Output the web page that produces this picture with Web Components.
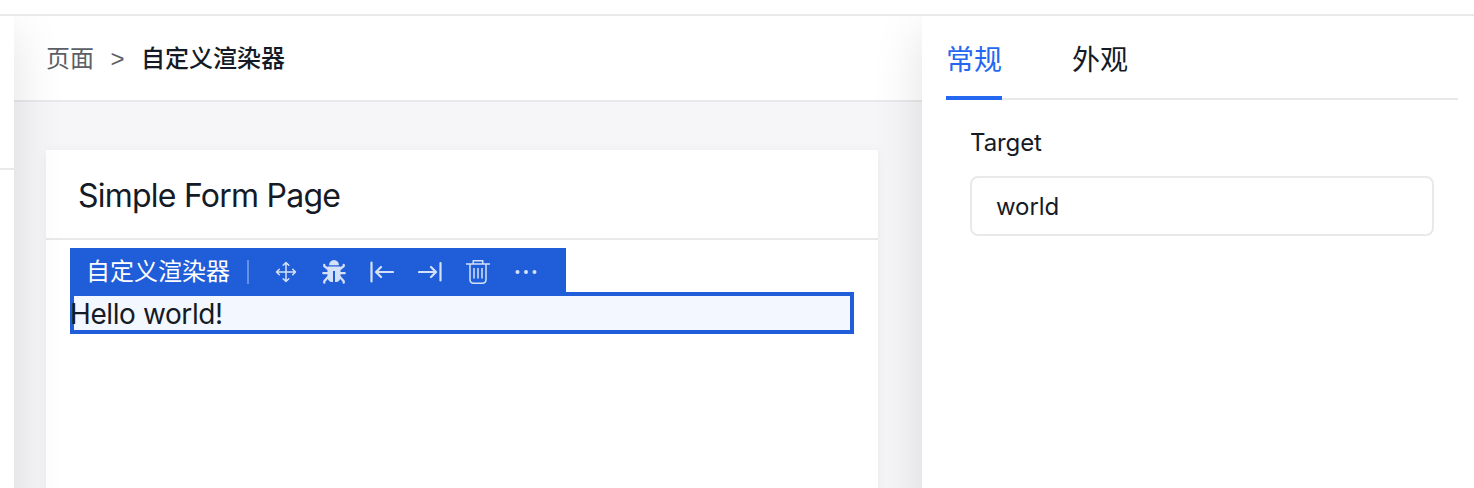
<!DOCTYPE html>
<html lang="zh-CN"><head><meta charset="utf-8"><title>Page editor</title>
<style>
html,body{margin:0;height:100%;overflow:hidden;background:#fff}
body{font-family:Inter,"Noto Sans CJK SC",sans-serif;color:#151b26}
</style></head><body>
<editor-shell>
  <side-rail slot="left"></side-rail>
  <editor-canvas slot="main">
    <bread-crumb parent="页面" slot="crumbs">自定义渲染器</bread-crumb>
    <page-card heading="Simple Form Page">
      <selection-toolbar>自定义渲染器</selection-toolbar>
      <selected-region>Hello world!</selected-region>
    </page-card>
  </editor-canvas>
  <property-panel slot="right">
    <panel-tab slot="tabs" active>常规</panel-tab>
    <panel-tab slot="tabs">外观</panel-tab>
    <form-field label="Target">world</form-field>
  </property-panel>
</editor-shell>
<script>
const define=(name,html)=>customElements.define(name,class extends HTMLElement{
  connectedCallback(){
    if(this.shadowRoot)return;
    const t=document.createElement('template');
    t.innerHTML=html;
    const root=this.attachShadow({mode:'open'});
    root.append(t.content.cloneNode(true));
    root.querySelectorAll('[data-attr]').forEach(n=>n.textContent=this.getAttribute(n.dataset.attr));
  }
});
define('editor-shell',`<style>
:host{display:flex;flex-direction:column;height:100vh}
header{flex:none;height:14px;border-bottom:2px solid #e8e9eb}
main{flex:1;display:grid;grid-template-columns:14px 908px 1fr;grid-template-rows:calc(100% + 80px);overflow:hidden}
</style><header></header><main><slot name="left"></slot><slot name="main"></slot><slot name="right"></slot></main>`);
define('side-rail',`<style>
:host{display:block;margin-left:-200px;background:#fff;z-index:2;box-shadow:0 16px 48px rgba(0,0,0,.12)}
div{height:152px;border-bottom:2px solid #e8e9eb}
</style><div></div>`);
define('editor-canvas',`<style>
:host{display:flex;flex-direction:column;background:#f6f6f9;min-height:0}
header{flex:none;height:84px;background:#fff;border-bottom:2px solid #e8e9eb}
section{flex:1;display:flex;padding:48px 44px 0 32px}
</style><header><slot name="crumbs"></slot></header><section><slot></slot></section>`);
define('bread-crumb',`<style>
:host{display:flex;align-items:center;box-sizing:border-box;height:84px;padding:1px 0 0 32px;font-size:24px;line-height:36px}
span{color:#5c5f66}
i{font-style:normal;color:#5c5f66;width:47px;text-align:center;font-family:"Liberation Sans",sans-serif;padding-top:1px;box-sizing:border-box}
b{font-weight:500}
</style><span data-attr="parent"></span><i>&gt;</i><b><slot></slot></b>`);
define('page-card',`<style>
:host{display:block;flex:1;background:#fff;box-shadow:0 2px 12px rgba(0,0,0,.05)}
h1{margin:0;height:88px;line-height:91px;padding-left:32px;font-size:32px;font-weight:400;letter-spacing:-.76px;border-bottom:2px solid #e8e9eb;font-family:Inter,sans-serif}
div{padding:8px 24px}
</style><h1 data-attr="heading"></h1><div><slot></slot></div>`);
define('selection-toolbar',`<style>
:host{display:flex;align-items:center;box-sizing:border-box;width:496px;height:44px;padding:4px 0 0 16px;background:#205dd9;color:#fff;font-size:24px;line-height:36px}
hr{margin:0 0 0 17px;border:0;width:2px;height:24px;background:#6791e5}
nav{display:flex;gap:24px;margin-left:25px;margin-right:auto}
svg{display:block;width:24px;height:24px;fill:none;stroke:#d5e1f8;stroke-width:1.5;stroke-linecap:round;stroke-linejoin:round}
</style><slot></slot><hr><nav>
<svg viewBox="0 0 24 24"><path d="M12 2.500v19M2.500 12h19M9.200 5.300L12 2.500l2.800 2.800M9.200 18.700l2.800 2.800 2.800-2.800M5.300 9.200L2.500 12l2.800 2.800M18.700 9.200l2.800 2.800-2.800 2.800"/></svg>
<svg viewBox="0 0 24 24"><path d="M7 5.200a5 5.200 0 0 1 10 0zM5.500 6.600h13V17q0 3.500-3.500 5h-2V11h-2v11H9q-3.500-1.500-3.500-5z" fill="#d5e1f8" stroke="none"/><path d="M2.300 5v1.200L6 9M21.700 5v1.200L18 9M6 13.200H1.300M18 13.200h4.700M6 17l-3.700 4.200v1.500M18 17l3.700 4.200v1.500" stroke-width="2.300" style="stroke-width:2.3"/></svg>
<svg viewBox="0 0 24 24" style="stroke-width:2.2"><path d="M1.500 2.500v19M23 12H6.500M11 7l-5 5 5 5"/></svg>
<svg viewBox="0 0 24 24" style="stroke-width:2.2"><path d="M22.500 3v17.500M1 12h16.500M13 7l5 5-5 5"/></svg>
<svg viewBox="0 0 24 24" style="overflow:visible;stroke-linecap:butt"><path d="M0 3.900h24M7.200 3.500V.8h9.600v2.700M4 4v15.500q0 3.700 3.700 3.700h8.600q3.700 0 3.700-3.700V4M8 8v10.500M12 8v10.500M16 8v10.500"/></svg>
<svg viewBox="0 0 24 24" style="fill:#d5e1f8;stroke:none"><circle cx="3.500" cy="12" r="2"/><circle cx="12" cy="12" r="2"/><circle cx="20.500" cy="12" r="2"/></svg>
</nav>`);
define('selected-region',`<style>
:host{display:block;box-sizing:border-box;height:42px;border:4px solid #205dd9;background:#f3f7ff;font-size:28px;line-height:36px;letter-spacing:-.4px}
span{margin-left:-4px}
</style><span><slot></slot></span>`);
define('property-panel',`<style>
:host{display:block;z-index:2;background:#fff;box-shadow:0 16px 48px rgba(0,0,0,.12);padding:0 16px 0 24px}
nav{display:flex;gap:70px;box-sizing:border-box;height:84px;border-bottom:2px solid #e8e9eb}
section{padding:24px 24px 0}
</style><nav><slot name="tabs"></slot></nav><section><slot></slot></section>`);
define('panel-tab',`<style>
:host{display:block;box-sizing:border-box;height:84px;width:56px;font-size:28px;line-height:88px;white-space:nowrap}
:host([active]){color:#2468f2;border-bottom:4px solid #2468f2}
</style><slot></slot>`);
define('form-field',`<style>
:host{display:block;font-size:24px;letter-spacing:-.1px}
label{display:block;height:40px;line-height:38px;margin-bottom:12px}
div{box-sizing:border-box;height:60px;border:2px solid #e8e9eb;border-radius:8px;padding-left:24px;line-height:57px}
</style><label data-attr="label"></label><div><slot></slot></div>`);
</script></body></html>
